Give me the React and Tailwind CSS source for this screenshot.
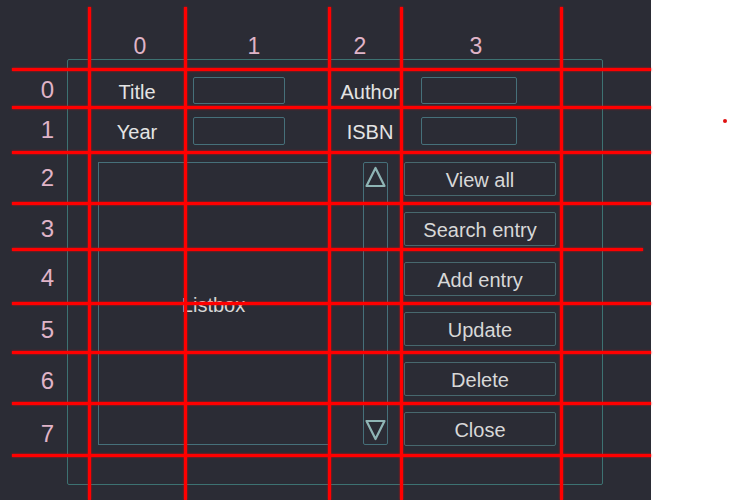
export default function App() {
  const hLines = [69, 107, 152, 203, 249, 303, 352, 403, 455];
  const vLines = [89, 185, 329, 401, 561];
  const buttons = ["View all", "Search entry", "Add entry", "Update", "Delete", "Close"];
  const rowLabels = [
    ["0", "h-[40px]"],
    ["1", "h-[40px]"],
    ["2", "h-[56px]"],
    ["3", "h-[46px]"],
    ["4", "h-[52px]"],
    ["5", "h-[52px]"],
    ["6", "h-[50px]"],
    ["7", "h-[56px]"],
  ];
  return (
    <div className="flex w-[730px] h-[500px] overflow-hidden font-['Liberation_Sans',Arial,sans-serif]">
      <div className="relative w-[651px] h-[500px] bg-[#2b2c35]">
        {/* column labels */}
        <div className="flex h-[59px] pt-[35px] text-[23px] leading-none text-[#e0b4c8]">
          <div className="ml-[120px] w-[40px] text-center">0</div>
          <div className="ml-[74px] w-[40px] text-center">1</div>
          <div className="ml-[66px] w-[40px] text-center">2</div>
          <div className="ml-[76px] w-[40px] text-center">3</div>
        </div>
        <div className="flex">
          {/* row labels */}
          <div className="w-[67px] flex flex-col pt-[11px] text-[24px] leading-none text-[#e0b4c8]">
            {rowLabels.map(([l, h]) => (
              <div key={l} className={`${h} flex items-center`}>
                <div className="ml-[28px] w-[40px] text-center">{l}</div>
              </div>
            ))}
          </div>
          {/* frame */}
          <div className="w-[536px] h-[426px] border border-[#3d7272] rounded-[2px] text-[#e4e4e4] text-[20px]">
            <div className="mt-[17px] flex items-center h-[27px]">
              <div className="ml-[37px] w-[64px] text-center pt-[2px]">Title</div>
              <div className="ml-[24px] w-[92px] h-[27px] border border-[#46707a] rounded-[2px]" />
              <div className="ml-[45px] w-[80px] text-center pt-[2px]">Author</div>
              <div className="ml-[11px] w-[96px] h-[27px] border border-[#46707a] rounded-[2px]" />
            </div>
            <div className="mt-[13px] flex items-center h-[28px]">
              <div className="ml-[37px] w-[64px] text-center pt-[2px]">Year</div>
              <div className="ml-[24px] w-[92px] h-[28px] border border-[#46707a] rounded-[2px]" />
              <div className="ml-[45px] w-[80px] text-center pt-[2px]">ISBN</div>
              <div className="ml-[11px] w-[96px] h-[28px] border border-[#46707a] rounded-[2px]" />
            </div>
            <div className="mt-[17px] flex">
              <div className="ml-[30px] w-[231px] h-[283px] border border-[#46707a] flex items-center justify-center text-[#d8d8d8] pt-[3px]">
                Listbox
              </div>
              <div className="ml-[34px] w-[25px] h-[283px] border border-[#46707a] rounded-[2px] flex flex-col justify-between items-center py-[2px]">
                <svg width="23" height="24" viewBox="0 0 23 24">
                  <path d="M11.5 3 L2.5 21 L20.5 21 Z" fill="none" stroke="#8fb5b5" strokeWidth="2.2" strokeLinejoin="round" />
                </svg>
                <svg width="23" height="24" viewBox="0 0 23 24">
                  <path d="M2.5 3 L20.5 3 L11.5 21 Z" fill="none" stroke="#8fb5b5" strokeWidth="2.2" strokeLinejoin="round" />
                </svg>
              </div>
              <div className="ml-[16px] w-[152px] h-[284px] flex flex-col justify-between">
                {buttons.map((b) => (
                  <div
                    key={b}
                    className="h-[34px] border border-[#47686e] rounded-[2px] flex items-center justify-center text-[#d8d8d8] pt-[2px]"
                  >
                    {b}
                  </div>
                ))}
              </div>
            </div>
          </div>
        </div>
        {/* red grid overlay */}
        <div className="absolute inset-0 pointer-events-none">
          {vLines.map((x) => (
            <div
              key={"v" + x}
              className="absolute top-[7px] bottom-0 w-[3px] bg-[#ff0000] shadow-[0_0_2px_#ff0000]"
              style={{ left: x - 1 }}
            />
          ))}
          {hLines.map((y) => (
            <div
              key={"h" + y}
              className="absolute left-[12px] h-[3px] bg-[#ff0000] shadow-[0_0_2px_#ff0000]"
              style={{ top: y - 1, right: y === 249 ? 8 : 0 }}
            />
          ))}
        </div>
      </div>
      <div className="flex-1 bg-white pt-[119px] pl-[72px]">
        <div className="w-[4px] h-[4px] rounded-full bg-[#e01010]" />
      </div>
    </div>
  );
}
